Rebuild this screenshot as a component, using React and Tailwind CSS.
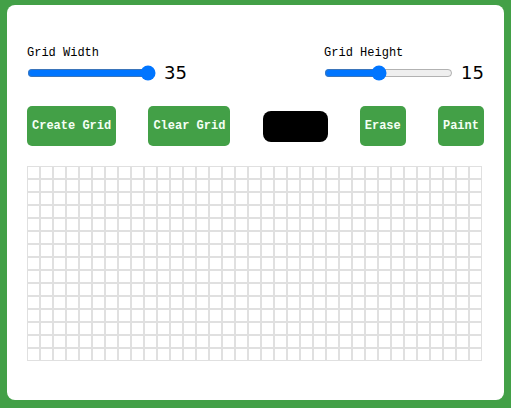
import { useState } from 'react'

const mono = { fontFamily: '"Liberation Mono", "DejaVu Sans Mono", monospace' }

function Slider({ label, value, onChange }) {
  return (
    <div className="flex flex-col">
      <label className="text-[12px] leading-4 text-black" style={mono}>{label}</label>
      <div className="flex items-center gap-[8px]">
        <input
          type="range"
          min={1}
          max={35}
          value={value}
          onChange={(e) => onChange(Number(e.target.value))}
          className="w-[129px] m-0 accent-[#0075ff]"
        />
        <span className="text-[18px] leading-6 text-black font-['DejaVu_Sans',sans-serif]">{value}</span>
      </div>
    </div>
  )
}

function Button({ children }) {
  return (
    <button
      className="h-[40px] px-[5px] rounded-[5px] bg-[#43a047] text-[12px] font-bold text-[#f4fff4]"
      style={mono}
    >
      {children}
    </button>
  )
}

export default function App() {
  const [cols, setCols] = useState(35)
  const [rows, setRows] = useState(15)

  return (
    <div className="w-full h-[408px] bg-[#43a047] pt-[5px] px-[7px]">
      <div className="h-[395px] bg-white rounded-lg px-5 pt-[40px]">
        {/* Sliders */}
        <div className="flex justify-between">
          <Slider label="Grid Width" value={cols} onChange={setCols} />
          <Slider label="Grid Height" value={rows} onChange={setRows} />
        </div>

        {/* Controls */}
        <div className="flex justify-between items-center mt-[21px]">
          <Button>Create Grid</Button>
          <Button>Clear Grid</Button>
          <div className="w-[65px] h-[31px] bg-black rounded-lg" />
          <Button>Erase</Button>
          <Button>Paint</Button>
        </div>

        {/* Grid */}
        <div className="mt-[20px] flex flex-col w-max">
          {Array.from({ length: rows }).map((_, r) => (
            <div key={r} className="flex">
              {Array.from({ length: cols }).map((_, c) => (
                <div key={c} className="w-[13px] h-[13px] border border-[#e0e0e0] bg-white" />
              ))}
            </div>
          ))}
        </div>
      </div>
    </div>
  )
}
